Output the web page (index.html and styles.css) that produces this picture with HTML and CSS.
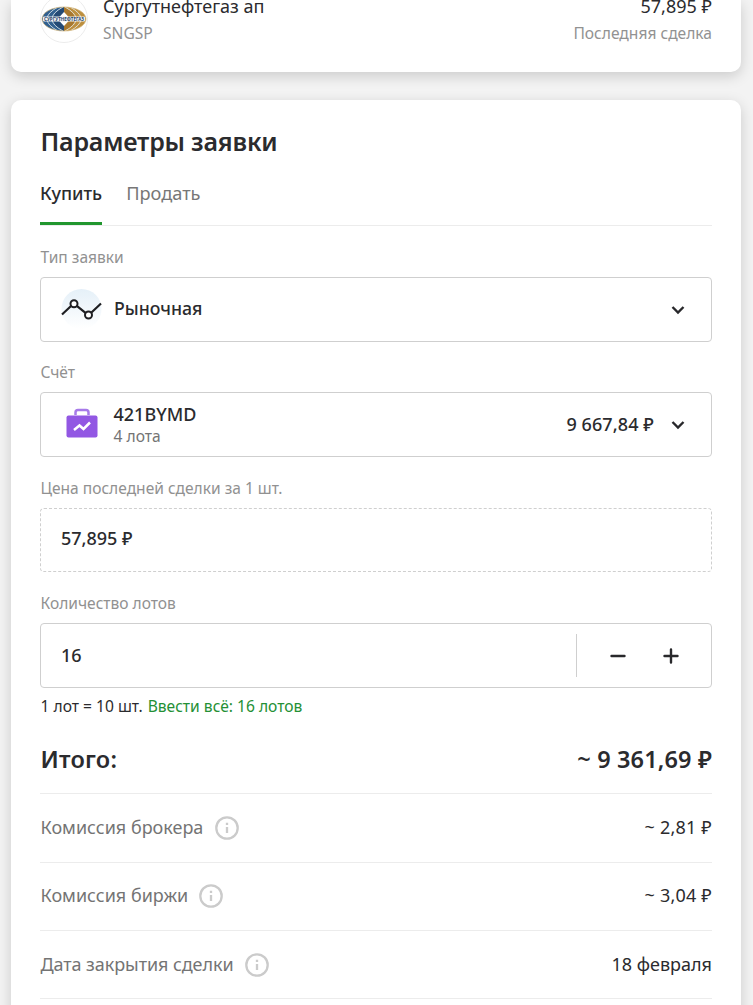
FILE: index.html
```html
<!DOCTYPE html>
<html lang="ru">
<head>
<meta charset="utf-8">
<title>Параметры заявки</title>
<link rel="stylesheet" href="styles.css">
</head>
<body>
<main class="page">
  <section class="card security">
    <svg class="security-logo" viewBox="0 0 48 48">
      <defs><clipPath id="oval"><ellipse cx="24" cy="24" rx="22" ry="12"/></clipPath></defs>
      <circle cx="24" cy="24" r="23.5" fill="#fff" stroke="#ececec"/>
      <g clip-path="url(#oval)">
        <rect x="2" y="12" width="22" height="24" fill="#31608f"/>
        <rect x="24" y="12" width="22" height="24" fill="#bd8f3e"/>
        <path d="M24 12Q15 16 12 24Q15 32 24 36" fill="#244a75"/>
        <path d="M24 12Q33 16 36 24Q33 32 24 36" fill="#a8782e"/>
        <path d="M18 12Q7 18 7 24Q7 30 18 36M23 12Q12 18 12 24Q12 30 23 36M30 12Q41 18 41 24Q41 30 30 36M25 12Q36 18 36 24Q36 30 25 36" fill="none" stroke="#e9edf0" stroke-width=".8"/>
        <path d="M24 17L30.500 24L24 31L17.500 24Z" fill="#fff"/>
      </g>
      <ellipse cx="24" cy="24" rx="22" ry="12" fill="none" stroke="#d3b67c" stroke-width=".7"/>
      <rect x="3" y="21.500" width="42" height="5" rx="1" fill="#f0f1f2"/>
      <text class="logo-text" x="24" y="25.600" text-anchor="middle" textLength="40" lengthAdjust="spacingAndGlyphs">СУРГУТНЕФТЕГАЗ</text>
    </svg>
    <div class="security-name">
      <div class="t-name">Сургутнефтегаз ап</div>
      <div class="t-ticker">SNGSP</div>
    </div>
    <div class="security-price">
      <div class="t-quote">57,895 ₽</div>
      <div class="t-last">Последняя сделка</div>
    </div>
  </section>

  <section class="card order">
    <h1 class="title">Параметры заявки</h1>
    <nav class="tabs">
      <a class="tab tab-active">Купить</a>
      <a class="tab">Продать</a>
    </nav>

    <label class="label label-type">Тип заявки</label>
    <div class="field">
      <svg class="type-icon" viewBox="0 0 42 40">
        <defs><linearGradient id="fade" x1="0" y1="0" x2="0" y2="1"><stop offset="0" stop-color="#e5f0f8"/><stop offset="1" stop-color="#fff"/></linearGradient></defs>
        <circle cx="20.500" cy="20" r="20" fill="url(#fade)"/>
        <path d="M1 25.500L10.300 16.800M15.800 16.800L24.800 24.200M30.200 23.700L40 14.500" fill="none" stroke="#1f1f22" stroke-width="2.200"/>
        <circle cx="13" cy="14.800" r="3.500" fill="#fff" stroke="#1f1f22" stroke-width="2"/>
        <circle cx="27.500" cy="26" r="3.500" fill="#fff" stroke="#1f1f22" stroke-width="2"/>
      </svg>
      <span class="value value-type">Рыночная</span>
      <svg class="chevron" viewBox="0 0 14 10"><path d="M1.500 2L7 7.500L12.500 2"/></svg>
    </div>

    <label class="label">Счёт</label>
    <div class="field">
      <svg class="case-icon" viewBox="0 0 32 30">
        <path d="M9.500 7V4.500Q9.500 2 12 2H20Q22.500 2 22.500 4.500V7" fill="none" stroke="#a77ae9" stroke-width="2.500"/>
        <rect x=".5" y="7.500" width="31" height="22" rx="2" fill="#9257e3"/>
        <path d="M8 22L13.500 17.500L17.500 21L24 14.500" fill="none" stroke="#fff" stroke-width="2.500"/>
      </svg>
      <div class="account">
        <div class="account-name">421BYMD</div>
        <div class="account-lots">4 лота</div>
      </div>
      <span class="value value-balance">9 667,84 ₽</span>
      <svg class="chevron chevron-account" viewBox="0 0 14 10"><path d="M1.500 2L7 7.500L12.500 2"/></svg>
    </div>

    <label class="label">Цена последней сделки за 1 шт.</label>
    <div class="field field-readonly"><span class="value">57,895 ₽</span></div>

    <label class="label">Количество лотов</label>
    <div class="field">
      <span class="value value-lots">16</span>
      <div class="stepper">
        <svg class="step" viewBox="0 0 16 16"><path d="M1.500 8H14.500"/></svg>
        <svg class="step" viewBox="0 0 16 16"><path d="M1.500 8H14.500M8 1.500V14.500"/></svg>
      </div>
    </div>
    <div class="note"><span>1 лот = 10 шт.</span><a class="note-all">Ввести всё: 16 лотов</a></div>

    <div class="total"><span>Итого:</span><span class="total-sum">~ 9 361,69 ₽</span></div>
    <div class="row">
      <span class="row-label">Комиссия брокера</span>
      <svg class="info" viewBox="0 0 24 24"><circle cx="12" cy="12" r="10.700"/><path d="M12 11V17M12 6.700V9"/></svg>
      <span class="row-value value-fee">~ 2,81 ₽</span>
    </div>
    <div class="row">
      <span class="row-label row-exchange">Комиссия биржи</span>
      <svg class="info" viewBox="0 0 24 24"><circle cx="12" cy="12" r="10.700"/><path d="M12 11V17M12 6.700V9"/></svg>
      <span class="row-value value-fee">~ 3,04 ₽</span>
    </div>
    <div class="row">
      <span class="row-label row-date">Дата закрытия сделки</span>
      <svg class="info" viewBox="0 0 24 24"><circle cx="12" cy="12" r="10.700"/><path d="M12 11V17M12 6.700V9"/></svg>
      <span class="row-value">18 февраля</span>
    </div>
  </section>
</main>
</body>
</html>
```
FILE: styles.css
```css
* { box-sizing: border-box; }
body { margin: 0; background: #f3f3f3; font-family: "Noto Sans", "Open Sans", sans-serif; color: #2b2b2e; }
.page { height: 1005px; padding: 0 12px 0 11px; overflow: hidden; }
.card { background: #fff; box-shadow: 0 4px 14px rgba(0, 0, 0, .17); padding: 0 29px; white-space: nowrap; }
.security { display: flex; height: 72px; border-radius: 0 0 10px 10px; }
.security-logo { flex: none; width: 48px; height: 48px; margin-top: -5px; }
.logo-text { font: bold 4.500px "Noto Sans", sans-serif; fill: #28466d; }
.security-name { margin-left: 15px; }
.security-price { margin-left: auto; text-align: right; }
.t-name, .t-quote { height: 24px; margin-top: -6px; font-size: 18px; line-height: 24px; }
.t-ticker, .t-last { height: 24px; margin-top: 3px; font-size: 15.600px; line-height: 25px; color: #929292; }

.order { height: 960px; margin-top: 28px; padding-top: 24px; border-radius: 10px; }
.title { height: 36px; margin: 0 0 0 .5px; font-size: 25px; font-weight: 600; line-height: 35px; letter-spacing: -.2px; }
.tabs { display: flex; gap: 24px; height: 51px; margin-top: 15px; padding-top: 3px; border-bottom: 1px solid #ececec; }
.tab { height: 47px; font-size: 18.200px; line-height: 30px; color: #777; }
.tab-active { font-size: 18px; color: #2b2b2e; font-weight: 500; border-bottom: 3px solid #21962e; border-radius: 2px 2px 0 0; }

.label { display: block; height: 24px; margin-top: 18.400px; padding-left: .5px; font-size: 15.550px; line-height: 24px; color: #919191; }
.label-type { margin-top: 19px; }
.field { display: flex; align-items: center; height: 65px; margin-top: 8px; padding: 0 26px 0 20px; border: 1px solid #cfcfcf; border-radius: 4px; }
.field-readonly { border-style: dashed; height: 64px; margin-bottom: 19.400px; }
.value { padding-bottom: 3px; font-size: 18px; font-weight: 500; line-height: 22px; }
.value-type { font-size: 17.700px; }
.value-lots { padding-bottom: 1px; }
.type-icon { flex: none; width: 42px; height: 40px; margin-right: 11px; margin-top: -2px; }
.chevron { flex: none; width: 14px; height: 10px; margin-left: auto; fill: none; stroke: #28282b; stroke-width: 2.400; }
.case-icon { flex: none; width: 32px; height: 30px; margin: -4px 15px 0 5px; }
.account { padding-left: .5px; }
.account-name { font-size: 18px; font-weight: 500; line-height: 22px; }
.account-lots { font-size: 15.600px; line-height: 22px; color: #747474; }
.value-balance { margin-left: auto; padding-bottom: 1px; letter-spacing: .1px; }
.chevron-account { margin-left: 17px; }
.stepper { display: flex; align-items: center; gap: 37px; height: 43px; margin-left: auto; padding: 0 6px 0 33px; border-left: 1px solid #cfcfcf; }
.step { width: 16px; height: 16px; fill: none; stroke: #28282b; stroke-width: 2.400; stroke-linecap: round; }
.note { display: flex; gap: 5px; height: 24px; margin-top: 6px; padding-left: .5px; font-size: 15.600px; line-height: 25px; }
.note-all { color: #249035; }

.total { display: flex; align-items: center; justify-content: space-between; height: 75.600px; padding: 7px 0 0 .5px; border-bottom: 1px solid #ececec; font-size: 23.500px; font-weight: 600; letter-spacing: .2px; }
.total-sum { letter-spacing: .15px; }
.row { display: flex; align-items: center; height: 68.300px; border-bottom: 1px solid #ececec; font-size: 18px; }
.total + .row { height: 69px; padding-top: 1px; }
.row-label { padding: 0 0 2px .5px; color: #747474; }
.row-exchange, .row-date { margin-right: -1px; }
.row-date { letter-spacing: -.08px; }
.info { flex: none; width: 24px; height: 24px; margin-left: 12px; fill: none; stroke: #cbcbcb; stroke-width: 2.300; }
.row-value { margin-left: auto; padding-bottom: 2px; }
.value-fee { letter-spacing: .2px; }
```
